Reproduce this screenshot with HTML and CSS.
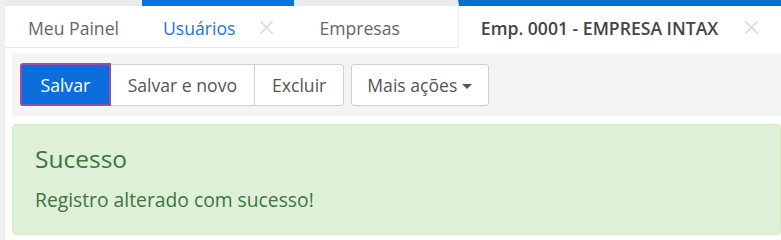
FILE: index.html
```html
<!DOCTYPE html>
<html lang="pt-BR">
<head>
<meta charset="utf-8">
<title>Emp. 0001 - EMPRESA INTAX</title>
<link rel="stylesheet" href="styles.css">
</head>
<body>
<div class="app">
  <nav class="tabs">
    <div class="tab tab-first"><span class="tab-label">Meu Painel</span></div>
    <div class="tab tab-hover"><span class="tab-label">Usuários</span>
      <svg class="close" viewBox="0 0 16 16" width="16" height="16"><path d="M1.5 1.5 L14.5 14.5 M14.5 1.5 L1.5 14.5"/></svg>
    </div>
    <div class="tab tab-third"><span class="tab-label">Empresas</span>
      <svg class="close hidden" viewBox="0 0 16 16" width="16" height="16"><path d="M1.5 1.5 L14.5 14.5 M14.5 1.5 L1.5 14.5"/></svg>
    </div>
    <div class="tab tab-active"><span class="tab-label">Emp. 0001 - EMPRESA INTAX</span>
      <svg class="close" viewBox="0 0 16 16" width="16" height="16"><path d="M1.5 1.5 L14.5 14.5 M14.5 1.5 L1.5 14.5"/></svg>
    </div>
  </nav>
  <main class="content">
    <div class="toolbar">
      <div class="btn-group">
        <button class="btn btn-primary">Salvar</button>
        <button class="btn">Salvar e novo</button>
        <button class="btn">Excluir</button>
      </div>
      <div class="btn-group">
        <button class="btn btn-more">Mais ações <span class="caret"></span></button>
      </div>
    </div>
    <div class="alert">
      <h4 class="alert-title">Sucesso</h4>
      <p class="alert-text">Registro alterado com sucesso!</p>
    </div>
  </main>
</div>
</body>
</html>
```
FILE: styles.css
```css
html, body {
  margin: 0;
  padding: 0;
  background: #ffffff;
}
body {
  font-family: "Open Sans", "Noto Sans", sans-serif;
  color: #555;
  overflow: hidden;
}
.app {
  border-left: 5px solid #f0f0f0;
  min-height: 240px;
}
.tabs {
  display: flex;
  white-space: nowrap;
}
.tab {
  display: flex;
  align-items: center;
  box-sizing: border-box;
  height: 48px;
  padding: 2px 20px 0 23px;
  border-top: 6px solid #e9ebee;
  border-bottom: 1px solid #e6e9ed;
  font-size: 17.6px;
  color: #666;
}
.tab-first {
  padding-right: 23px;
}
.tab-hover {
  border-top-color: #0a72e0;
  color: #1a76d8;
  padding-left: 21px;
  padding-right: 20px;
}
.tab-hover .close {
  margin-left: 24px;
}
.tab-third {
  padding-left: 25px;
  padding-right: 21px;
}
.tab-active {
  border-top-color: #0870c8;
  border-bottom-color: #ffffff;
  border-left: 1px solid #e6e9ed;
  color: #444;
  font-weight: 600;
  padding-left: 22px;
  flex: 1;
}
.close {
  margin-left: 22px;
  width: 15px;
  height: 15px;
  fill: none;
  stroke: #cfcfcf;
  stroke-width: 1.4;
}
.close.hidden {
  visibility: hidden;
}
.tab-active .close {
  margin-left: 26px;
}
.content {
  padding: 5px 0 0 7px;
}
.toolbar {
  display: flex;
  gap: 7px;
  background: #f4f4f4;
  padding: 11px 8px 10px;
}
.btn-group {
  display: flex;
}
.btn {
  font-family: inherit;
  font-size: 17.6px;
  color: #555;
  background: #ffffff;
  border: 1px solid #d0d0d0;
  height: 42px;
  padding: 0 17px;
  margin: 0 0 0 -1px;
  cursor: pointer;
  display: flex;
  align-items: center;
}
.btn-more {
  padding: 0 16px 0 15px;
}
.btn-group .btn:first-child {
  margin-left: 0;
  border-radius: 3px 0 0 3px;
}
.btn-group .btn:last-child {
  border-radius: 0 3px 3px 0;
}
.btn-group .btn:only-child {
  border-radius: 3px;
}
.btn.btn-primary {
  background: #0a6fdc;
  color: #ffffff;
  border: 2px solid #9b4cab;
  border-radius: 0;
  padding: 0 18.5px;
  height: 43px;
  margin-top: -1px;
  position: relative;
  z-index: 1;
}
.caret {
  display: inline-block;
  width: 0;
  height: 0;
  margin-left: 5px;
  margin-top: 2px;
  border-top: 5px solid #555;
  border-left: 5px solid transparent;
  border-right: 5px solid transparent;
}
.alert {
  box-sizing: border-box;
  margin-top: 8px;
  background: #dff0d8;
  border: 1px solid #d6e9c6;
  border-radius: 4px;
  color: #3c763d;
  padding: 18px 22px 0;
  height: 111px;
}
.alert-title {
  margin: 0;
  font-size: 24.5px;
  font-weight: 400;
  line-height: 32px;
}
.alert-text {
  margin: 12px 0 0;
  font-size: 19.3px;
  line-height: 26px;
}
```
